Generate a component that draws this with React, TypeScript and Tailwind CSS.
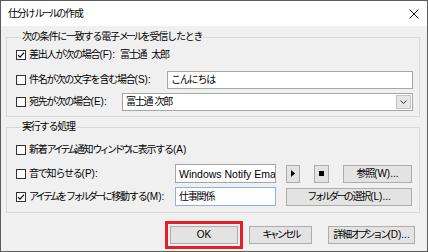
import type { ReactNode } from 'react'

const runs = /([\u30a0-\u30ff]+|[\u3000-\u309f\u3400-\u9fff\uff00-\uffef]+)/
const kata = /^[\u30a0-\u30ff]+$/
const cjk = /^[\u3000-\u309f\u3400-\u9fff\uff00-\uffef]+$/

// squeeze CJK runs to match the narrow dialog font (katakana is narrower still)
function JP({ text }: { text: string }) {
  return (
    <>
      {text.split(runs).map((part, i) => {
        if (!part) return null
        if (kata.test(part))
          return (
            <span key={i} className="tracking-[-2.7px]">
              {part}
            </span>
          )
        if (cjk.test(part))
          return (
            <span key={i} className="tracking-[-1.2px]">
              {part}
            </span>
          )
        if (part === ' ')
          return (
            <span key={i} className="ml-[2px]">
              {' '}
            </span>
          )
        return <span key={i}>{part}</span>
      })}
    </>
  )
}

function Check({ checked }: { checked?: boolean }) {
  return (
    <span className="w-[10px] h-[10px] border border-[#333333] bg-white flex items-center justify-center shrink-0">
      {checked && (
        <svg width="8" height="8" viewBox="0 0 8 8">
          <path d="M1 4.2 L3 6.2 L7 1.6" stroke="#000" strokeWidth="1.1" fill="none" />
        </svg>
      )}
    </span>
  )
}

function CheckLabel({ text, checked, className = '' }: { text: string; checked?: boolean; className?: string }) {
  return (
    <div className={`flex items-center gap-[3px] shrink-0 ${className}`}>
      <Check checked={checked} />
      <span className="whitespace-nowrap">
        <JP text={text} />
      </span>
    </div>
  )
}

function Btn({ children, className = '' }: { children: ReactNode; className?: string }) {
  return (
    <div
      className={`h-[18px] border border-[#adadad] bg-[#e3e3e3] flex items-center justify-center shrink-0 whitespace-nowrap ${className}`}
    >
      {children}
    </div>
  )
}

export default function App() {
  return (
    <div className="w-[428px] h-[252px] border border-[#5c5c5c] bg-[#f0f0f0] flex flex-col text-[10px] leading-[14px] text-black font-['Liberation_Sans','Noto_Sans_CJK_JP',sans-serif] overflow-hidden">
      {/* Title bar */}
      <div className="h-[25px] bg-white flex items-center justify-between pl-[7px] pr-[8px] shrink-0">
        <span>
          <JP text="仕分けルールの作成" />
        </span>
        <svg width="10" height="10" viewBox="0 0 10 10">
          <path d="M0.5 0.5 L9.5 9.5 M9.5 0.5 L0.5 9.5" stroke="#111" strokeWidth="1" />
        </svg>
      </div>

      <div className="flex-1 pt-[4px] pl-[5px]">
        {/* Conditions */}
        <fieldset className="w-[414px] border border-[#d8d8d8] pl-[9px] pr-[6px] pb-[5px]">
          <legend className="ml-[5px] px-[1px] leading-[14px]">
            <JP text="次の条件に一致する電子メールを受信したとき" />
          </legend>
          <div className="flex items-center h-[18px] mt-[2px]">
            <CheckLabel text="差出人が次の場合(F):" checked />
            <span className="ml-[5px] whitespace-nowrap">
              <JP text="富士通 太郎" />
            </span>
          </div>
          <div className="flex items-center h-[18px] mt-[7px]">
            <CheckLabel text="件名が次の文字を含む場合(S):" className="w-[151px]" />
            <div className="flex-1 h-full border border-[#a6a6a6] bg-white flex items-center pl-[3px]">
              <JP text="こんにちは" />
            </div>
          </div>
          <div className="flex items-center h-[18px] mt-[4px]">
            <CheckLabel text="宛先が次の場合(E):" className="w-[106px]" />
            <div className="flex-1 h-full border border-[#a6a6a6] bg-white flex items-stretch p-px">
              <div className="flex-1 flex items-center pl-[2px]">
                <JP text="富士通 次郎" />
              </div>
              <div className="w-[15px] border border-[#c4c4c4] bg-[#e6e6e6] flex items-center justify-center">
                <svg width="7" height="4" viewBox="0 0 7 4">
                  <path d="M0.5 0.5 L3.5 3.5 L6.5 0.5" stroke="#333" strokeWidth="1" fill="none" />
                </svg>
              </div>
            </div>
          </div>
        </fieldset>

        {/* Actions */}
        <fieldset className="w-[414px] mt-[3px] border border-[#d8d8d8] pl-[9px] pr-[6px] pb-[6px]">
          <legend className="ml-[5px] px-[1px] leading-[14px]">
            <JP text="実行する処理" />
          </legend>
          <div className="flex items-center h-[18px] mt-[7px]">
            <CheckLabel text="新着アイテム通知ウィンドウに表示する(A)" />
          </div>
          <div className="flex items-center h-[19px] mt-[5px]">
            <CheckLabel text="音で知らせる(P):" className="w-[159px]" />
            <div className="w-[101px] h-full border border-[#a6a6a6] bg-white flex items-center pl-[3px] overflow-hidden whitespace-nowrap text-[10.5px]">
              Windows Notify Email.wav
            </div>
            <Btn className="w-[14px] ml-[10px]">
              <svg width="4" height="7" viewBox="0 0 4 7">
                <path d="M0 0 L4 3.5 L0 7 Z" fill="#000" />
              </svg>
            </Btn>
            <Btn className="w-[15px] ml-[14px]">
              <span className="w-[5px] h-[5px] bg-black" />
            </Btn>
            <Btn className="w-[69px] ml-[14px]">
              <JP text="参照(W)..." />
            </Btn>
          </div>
          <div className="flex items-center h-[19px] mt-[4px]">
            <CheckLabel text="アイテムをフォルダーに移動する(M):" checked className="w-[159px]" />
            <div className="w-[101px] h-full border border-[#8fb2d6] bg-white flex items-center pl-[3px]">
              <JP text="仕事関係" />
            </div>
            <Btn className="w-[126px] ml-[10px]">
              <JP text="フォルダーの選択(L)..." />
            </Btn>
          </div>
        </fieldset>

        {/* Dialog buttons */}
        <div className="flex items-center justify-end mt-[8px] pr-[12px]">
          <div className="border-[3px] border-[#e2202c] p-[2px]">
            <Btn className="w-[68px]">OK</Btn>
          </div>
          <Btn className="w-[63px] ml-[6px]">
            <JP text="キャンセル" />
          </Btn>
          <Btn className="w-[87px] ml-[16px]">
            <JP text="詳細オプション(D)..." />
          </Btn>
        </div>
      </div>
    </div>
  )
}
